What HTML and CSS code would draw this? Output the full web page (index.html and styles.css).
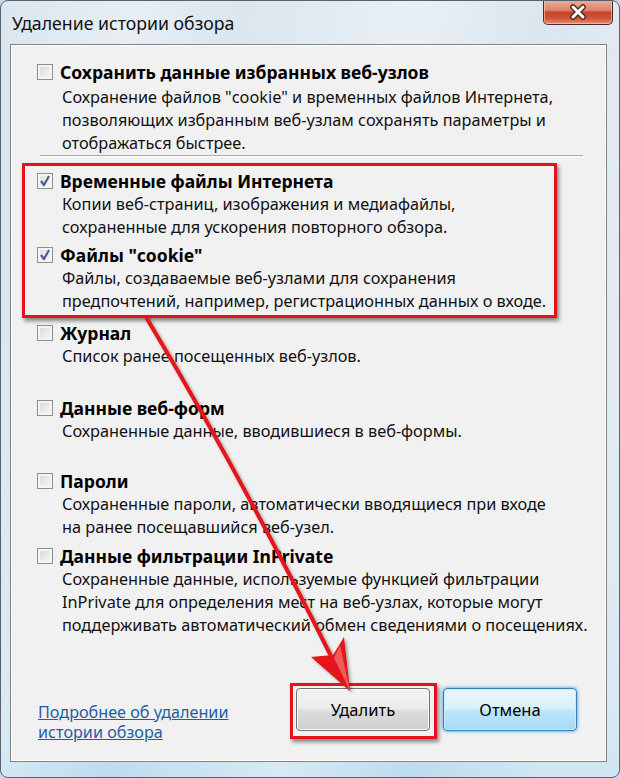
FILE: index.html
```html
<!DOCTYPE html>
<html lang="ru">
<head>
<meta charset="utf-8">
<title>Удаление истории обзора</title>
<link rel="stylesheet" href="styles.css">
</head>
<body>
<div class="window">
  <div class="titlebar">
    <span class="title">Удаление истории обзора</span>
    <div class="close">
      <svg width="20" height="16" viewBox="0 0 20 16">
        <path d="M5 3 L15 13 M15 3 L5 13" stroke="#4a2218" stroke-width="5.5" stroke-linecap="round"/>
        <path d="M5 3 L15 13 M15 3 L5 13" stroke="#ffffff" stroke-width="3" stroke-linecap="round"/>
      </svg>
    </div>
  </div>
  <div class="panel">
    <div class="item i1">
      <span class="cb"></span>
      <div class="head">Сохранить данные избранных веб-узлов</div>
      <div class="desc">Сохранение файлов "cookie" и временных файлов Интернета,<br>позволяющих избранным веб-узлам сохранять параметры и<br>отображаться быстрее.</div>
    </div>
    <div class="sep"></div>
    <div class="item i2">
      <span class="cb checked"><svg width="14" height="14" viewBox="0 0 14 14"><path d="M3 7 L6 11 L11 2" fill="none" stroke="#4b5c98" stroke-width="2.2" stroke-linejoin="round"/></svg></span>
      <div class="head">Временные файлы Интернета</div>
      <div class="desc">Копии веб-страниц, изображения и медиафайлы,<br>сохраненные для ускорения повторного обзора.</div>
    </div>
    <div class="item i3">
      <span class="cb checked"><svg width="14" height="14" viewBox="0 0 14 14"><path d="M3 7 L6 11 L11 2" fill="none" stroke="#4b5c98" stroke-width="2.2" stroke-linejoin="round"/></svg></span>
      <div class="head">Файлы "cookie"</div>
      <div class="desc">Файлы, создаваемые веб-узлами для сохранения<br>предпочтений, например, регистрационных данных о входе.</div>
    </div>
    <div class="item i4">
      <span class="cb"></span>
      <div class="head">Журнал</div>
      <div class="desc">Список ранее посещенных веб-узлов.</div>
    </div>
    <div class="item i5">
      <span class="cb"></span>
      <div class="head">Данные веб-форм</div>
      <div class="desc">Сохраненные данные, вводившиеся в веб-формы.</div>
    </div>
    <div class="item i6">
      <span class="cb"></span>
      <div class="head">Пароли</div>
      <div class="desc">Сохраненные пароли, автоматически вводящиеся при входе<br>на ранее посещавшийся веб-узел.</div>
    </div>
    <div class="item i7">
      <span class="cb"></span>
      <div class="head">Данные фильтрации InPrivate</div>
      <div class="desc">Сохраненные данные, используемые функцией фильтрации<br>InPrivate для определения мест на веб-узлах, которые могут<br>поддерживать автоматический обмен сведениями о посещениях.</div>
    </div>
    <div class="footer">
      <a class="link" href="#">Подробнее об удалении<br>истории обзора</a>
      <div class="buttons">
        <button class="btn">Удалить</button>
        <button class="btn default">Отмена</button>
      </div>
    </div>
  </div>

  <div class="markbox box1"></div>
  <div class="markbox box2"></div>
  <svg class="arrow" width="620" height="778" viewBox="0 0 620 778">
    <defs>
      <filter id="sh" x="-20%" y="-20%" width="140%" height="140%">
        <feDropShadow dx="2" dy="2" stdDeviation="1.5" flood-color="#000" flood-opacity="0.35"/>
      </filter>
    </defs>
    <g filter="url(#sh)">
      <path d="M146 317 Q238 470 334 662" fill="none" stroke="#e3131b" stroke-width="4"/>
      <polygon points="350,691 344,637 333,655 311,657" fill="#e3131b"/>
      <polygon points="350,691 340,645 334,658" fill="#f25a5a"/>
    </g>
  </svg>
</div>
</body>
</html>
```

FILE: styles.css
```css
* { box-sizing: border-box; }
html, body { margin: 0; padding: 0; }
body {
  width: 620px;
  height: 778px;
  overflow: hidden;
  font-family: "Noto Sans", "Open Sans", sans-serif;
  background: #c9dbe9;
}
.window {
  position: relative;
  width: 620px;
  height: 778px;
  border: 1px solid #55626f;
  border-radius: 8px;
  background:
    linear-gradient(100deg, rgba(255,255,255,0) 0%, rgba(255,255,255,0.35) 18%, rgba(255,255,255,0) 32%, rgba(255,255,255,0.4) 55%, rgba(255,255,255,0) 72%, rgba(255,255,255,0.3) 90%),
    linear-gradient(180deg, #dbe6ef 0%, #d6e2ec 40%, #cfe0ee 85%, #bcdcee 100%);
  overflow: hidden;
}
.titlebar {
  display: flex;
  align-items: flex-start;
  height: 43px;
  padding: 0 6px 0 11px;
}
.title {
  margin-top: 10px;
  font-size: 17.7px;
  line-height: 24px;
  color: #111;
}
.close {
  margin-left: auto;
  width: 70px;
  height: 25px;
  margin-top: -1px;
  border: 1px solid #4f2a22;
  border-top: none;
  border-radius: 0 0 5px 5px;
  background: linear-gradient(180deg, #e9b0a2 0%, #dc846d 42%, #c4462a 52%, #d0553a 78%, #e79479 100%);
  box-shadow: inset 0 0 0 1px rgba(255,210,200,0.55);
  display: flex;
  align-items: center;
  justify-content: center;
}
.panel {
  margin-left: 9px;
  width: 597px;
  height: 718px;
  border: 1px solid #7f8385;
  box-shadow: inset 0 0 0 1px #ffffff;
  background: #f1f1f1;
  padding: 15px 29px 0 26px;
}
.item {
  display: grid;
  grid-template-columns: 16px 1fr;
  column-gap: 7px;
  white-space: nowrap;
}
.cb {
  grid-row: 1;
  grid-column: 1;
  align-self: center;
  width: 16px;
  height: 16px;
  border: 1px solid #8e8f8f;
  background: linear-gradient(135deg, #d6d6d6 0%, #ececec 60%, #fafafa 100%);
  box-shadow: inset 0 0 0 2px #f4f4f4;
  display: flex;
  align-items: center;
  justify-content: center;
}
.cb.checked { background: linear-gradient(135deg, #dcdcdc 0%, #f2f2f2 70%, #ffffff 100%); }
.head {
  grid-row: 1;
  grid-column: 2;
  font-weight: bold;
  font-size: 17.5px;
  line-height: 24px;
  color: #000;
}
.desc {
  grid-row: 2;
  grid-column: 2;
  padding-left: 2px;
  font-size: 16.3px;
  line-height: 23px;
  color: #111;
}
.i1 .desc { margin-top: 2px; }
.sep {
  margin: 0 0 0 3px;
  width: 543px;
  height: 2px;
  border-top: 1px solid #a9a9a9;
  border-bottom: 1px solid #ffffff;
}
.i2 { margin-top: 12px; }
.i3 { margin-top: 4px; }
.i4 { margin-top: 8px; }
.i5 { margin-top: 28px; }
.i6 { margin-top: 26px; }
.i7 { margin-top: 5px; }
.footer {
  display: flex;
  align-items: flex-start;
  margin-top: 51px;
}
.link {
  margin-top: 14px;
  margin-left: 1px;
  font-size: 16.2px;
  line-height: 20px;
  color: #1f5da6;
  text-decoration: underline;
}
.buttons {
  margin-left: auto;
  display: flex;
  gap: 13px;
}
.btn {
  width: 134px;
  height: 43px;
  font-family: "Noto Sans", "Open Sans", sans-serif;
  font-size: 16.5px;
  color: #000;
  border: 1px solid #707070;
  border-radius: 4px;
  background: linear-gradient(180deg, #f3f3f3 0%, #ebebeb 48%, #dddddd 52%, #cfcfcf 100%);
  box-shadow: inset 0 0 0 1px #fbfbfb;
  padding: 0;
}
.btn.default {
  border-color: #3c7fb1;
  background: linear-gradient(180deg, #eaf6fd 0%, #d9f0fc 48%, #bee6fd 52%, #a7d9f5 100%);
  box-shadow: inset 0 0 0 1px #c8ecfd, 0 0 3px 1px #6fbce8;
}
.markbox {
  position: absolute;
  border: 3px solid #e3121c;
  box-shadow: 2px 3px 4px rgba(0,0,0,0.45);
  pointer-events: none;
}
.box1 { left: 21px; top: 162px; width: 535px; height: 155px; }
.box2 { left: 289px; top: 682px; width: 147px; height: 56px; }
.arrow {
  position: absolute;
  left: -1px;
  top: -1px;
  pointer-events: none;
}
```
